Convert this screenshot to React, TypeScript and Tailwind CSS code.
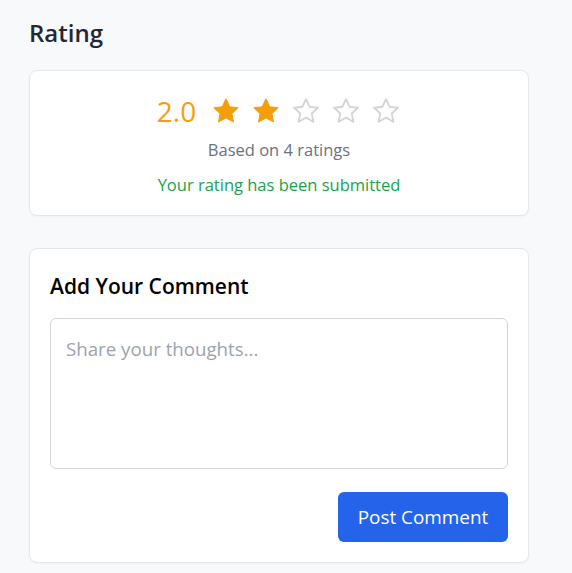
import React from "react";

function Star({ filled }: { filled: boolean }) {
  return (
    <svg width="30" height="30" viewBox="0 0 24 24" className="block">
      <path
        d="M12 2.5l2.9 6.1 6.6.8-4.9 4.6 1.3 6.6L12 17.3l-5.9 3.3 1.3-6.6-4.9-4.6 6.6-.8z"
        fill={filled ? "#f59e0b" : "none"}
        stroke={filled ? "#f59e0b" : "#d1d5db"}
        strokeWidth={filled ? 1 : 1.5}
        strokeLinejoin="round"
      />
    </svg>
  );
}

export default function App() {
  return (
    <div
      className="min-h-[573px] bg-[#f8f9fb] px-[29px] pt-[17px]"
      style={{ fontFamily: '"Open Sans", "Noto Sans", sans-serif' }}
    >
      <h2 className="text-[24px] font-semibold text-[#1f2937] leading-[32px]">Rating</h2>
      <div className="mt-[21px] w-[500px] h-[146px] bg-white border border-[#e5e7eb] rounded-lg flex flex-col items-center pt-[20px] shadow-[0_1px_2px_rgba(0,0,0,0.03)]">
        <div className="flex items-center">
          <span className="text-[28px] font-medium text-[#f59e0b] leading-[40px] mr-[15px]">2.0</span>
          <div className="flex gap-[10px]">
            <Star filled />
            <Star filled />
            <Star filled={false} />
            <Star filled={false} />
            <Star filled={false} />
          </div>
        </div>
        <p className="mt-[7px] text-[16.5px] text-[#6b7280] leading-[24px]">Based on 4 ratings</p>
        <p className="mt-[11px] text-[16.5px] text-[#16a34a] leading-[24px]">Your rating has been submitted</p>
      </div>
      <div className="mt-[32px] w-[500px] h-[315px] bg-white border border-[#e5e7eb] rounded-lg p-[20px] shadow-[0_1px_2px_rgba(0,0,0,0.03)]">
        <h3 className="text-[21px] font-semibold text-black leading-[28px] mt-[3px]">Add Your Comment</h3>
        <textarea
          placeholder="Share your thoughts..."
          className="mt-[18px] block w-[458px] h-[151px] border border-[#d1d5db] rounded-md px-[15px] py-[17px] text-[18.7px] leading-[26px] text-[#111827] placeholder:text-[#9ca3af] resize-none outline-none"
        />
        <div className="flex justify-end mt-[23px]">
          <button className="w-[170px] h-[50px] bg-[#2563eb] text-white text-[18.9px] rounded-md">Post Comment</button>
        </div>
      </div>
    </div>
  );
}
